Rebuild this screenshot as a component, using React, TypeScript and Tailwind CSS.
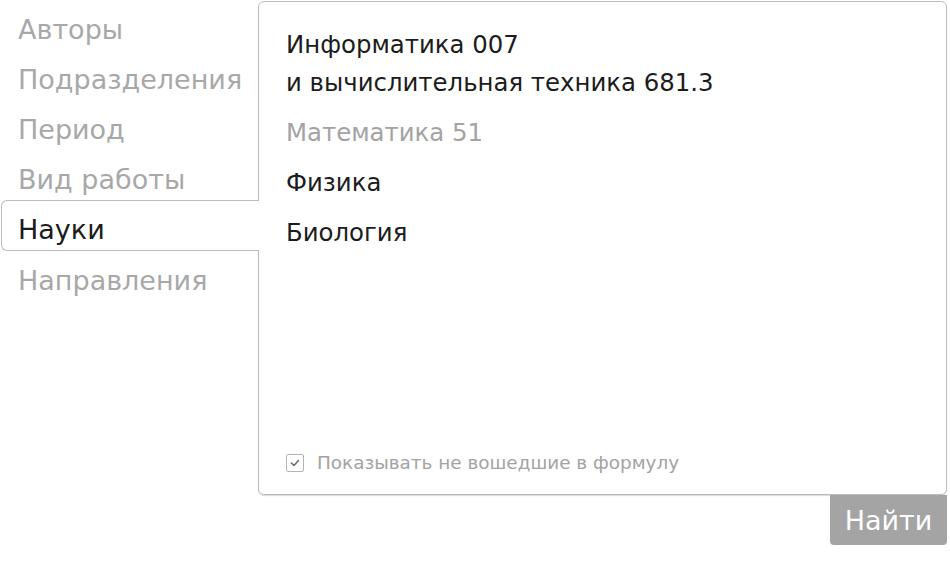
import React from 'react';

const tabs = ['Авторы', 'Подразделения', 'Период', 'Вид работы', 'Науки', 'Направления'];
const active = 'Науки';

const sciences = [
  { name: 'Информатика 007\nи вычислительная техника 681.3', muted: false },
  { name: 'Математика 51', muted: true },
  { name: 'Физика', muted: false },
  { name: 'Биология', muted: false },
];

export default function App() {
  return (
    <div className="w-[950px] h-[562px] bg-white flex flex-col font-['DejaVu_Sans',sans-serif]">
      <div className="flex items-start">
        {/* left tabs */}
        <nav className="w-[258px] flex flex-col text-[27px]">
          {tabs.map((t) =>
            t === active ? (
              <div
                key={t}
                className="relative z-10 ml-[1px] w-[258px] h-[51px] -mr-[1px] border border-r-0 border-[#bcbcbc] rounded-l-[6px] bg-white pl-[16px] pt-[9px] leading-[40px] text-[#1c1c1c]"
              >
                {t}
              </div>
            ) : (
              <div key={t} className="h-[50px] pl-[18px] pt-[10px] leading-[40px] text-[#a8a8a8]">
                {t}
              </div>
            )
          )}
        </nav>

        {/* panel */}
        <section className="mt-[1px] w-[689px] h-[494px] border border-[#bcbcbc] rounded-[6px] shadow-[0_1px_1px_rgba(0,0,0,0.15)] flex flex-col pl-[27px] pt-[24px] pb-[17px]">
          <ul className="flex flex-col gap-[12px] text-[24.4px] leading-[38px]">
            {sciences.map((s) => (
              <li key={s.name} className={`whitespace-pre-line ${s.muted ? 'text-[#a3a3a3]' : 'text-[#1c1c1c]'}`}>
                {s.name}
              </li>
            ))}
          </ul>
          <label className="mt-auto flex items-center gap-[13px] text-[18.4px] text-[#a3a3a3]">
            <span className="w-[18px] h-[18px] border border-[#b5b5b5] rounded-[2px] flex items-center justify-center">
              <svg width="10" height="8" viewBox="0 0 10 8" fill="none">
                <path d="M1.5 4l2.5 2.5L8.5 1.5" stroke="#6b6b6b" strokeWidth="1.6" strokeLinecap="round" strokeLinejoin="round" />
              </svg>
            </span>
            Показывать не вошедшие в формулу
          </label>
        </section>
      </div>

      <div className="flex justify-end pr-[3px]">
        <button className="w-[117px] h-[50px] bg-[#a4a4a4] text-white text-[27px] rounded-b-[4px] leading-none">
          Найти
        </button>
      </div>
    </div>
  );
}
